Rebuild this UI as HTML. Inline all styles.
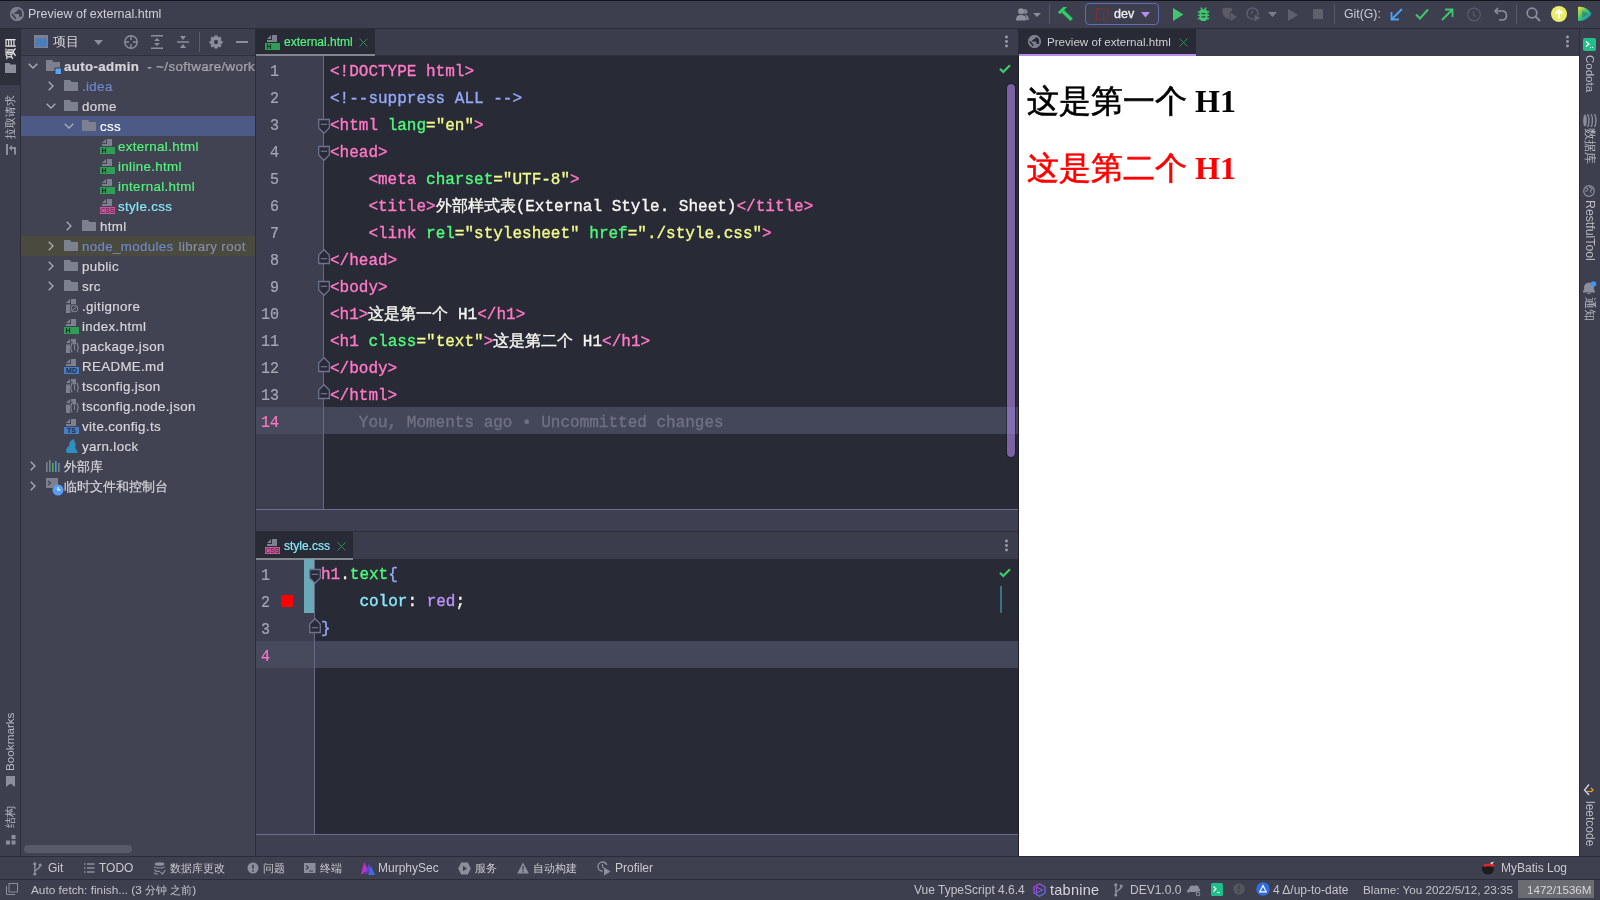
<!DOCTYPE html><html><head><meta charset="utf-8"><style>
*{margin:0;padding:0;box-sizing:border-box}
html,body{width:1600px;height:900px;overflow:hidden;background:#3c3e4d;font-family:"Liberation Sans",sans-serif;color:#cfd0d6}
.a{position:absolute}
svg{position:absolute;overflow:visible}
.t{position:absolute;white-space:nowrap;font-size:13px;line-height:20px}
.code{position:absolute;font-family:"Liberation Mono",monospace;font-size:16px;line-height:27px;white-space:pre;color:#f8f8f2;height:27px;-webkit-text-stroke:0.35px currentColor}
.ln{position:absolute;font-family:"Liberation Mono",monospace;font-size:15px;line-height:27px;color:#a5a7b5;text-align:right;height:27px;transform:scaleY(1.12);transform-origin:0 19.5px;-webkit-text-stroke:0.2px currentColor}
.pk{color:#ff79c6}.gr{color:#50fa7b}.ye{color:#f1fa8c}.cm{color:#6272a4}.cm2{color:#95a9f6}.bl{color:#6f7182}.cy{color:#8be9fd}.pu{color:#bd93f9}.wh{color:#f8f8f2}
.vt{position:absolute;transform-origin:0 0;white-space:nowrap;font-size:12px;line-height:14px;color:#c4c5cc}
</style></head><body><div id="root" style="position:absolute;left:0;top:0;width:1600px;height:900px;will-change:transform">
<div class="a" style="left:0px;top:0px;width:1600px;height:1px;background:#141519;"></div>
<div class="a" style="left:0px;top:1px;width:1600px;height:27px;background:#3d3f4e;"></div>
<div class="a" style="left:0px;top:28px;width:1600px;height:1px;background:#2a2c36;"></div>
<div class="a" style="left:0px;top:29px;width:20px;height:827px;background:#3d3f4e;"></div>
<div class="a" style="left:0px;top:29px;width:20px;height:56px;background:#2e303c;"></div>
<div class="a" style="left:20px;top:29px;width:1px;height:827px;background:#2b2d38;"></div>
<div class="a" style="left:21px;top:29px;width:234px;height:827px;background:#414352;"></div>
<div class="a" style="left:21px;top:29px;width:234px;height:26px;background:#3c3e4e;"></div>
<div class="a" style="left:21px;top:55px;width:234px;height:1px;background:#2e303b;"></div>
<div class="a" style="left:255px;top:29px;width:1px;height:827px;background:#2b2d38;"></div>
<div class="a" style="left:256px;top:29px;width:762px;height:26px;background:#3b3d4d;"></div>
<div class="a" style="left:256px;top:55px;width:762px;height:1px;background:#2e303b;"></div>
<div class="a" style="left:256px;top:56px;width:762px;height:453px;background:#282a36;"></div>
<div class="a" style="left:256px;top:56px;width:67px;height:453px;background:#3d3f50;"></div>
<div class="a" style="left:323px;top:56px;width:1px;height:453px;background:#666a86;"></div>
<div class="a" style="left:256px;top:407px;width:67px;height:27px;background:#474a5c;"></div>
<div class="a" style="left:324px;top:407px;width:694px;height:27px;background:#44475a;"></div>
<div class="a" style="left:256px;top:509px;width:762px;height:1px;background:#6b6f92;"></div>
<div class="a" style="left:256px;top:510px;width:762px;height:21px;background:#3e4051;"></div>
<div class="a" style="left:256px;top:531px;width:762px;height:1px;background:#2b2d38;"></div>
<div class="a" style="left:256px;top:532px;width:762px;height:27px;background:#3b3d4d;"></div>
<div class="a" style="left:256px;top:559px;width:762px;height:297px;background:#282a36;"></div>
<div class="a" style="left:256px;top:559px;width:58px;height:297px;background:#3d3f50;"></div>
<div class="a" style="left:314px;top:559px;width:1px;height:297px;background:#666a86;"></div>
<div class="a" style="left:256px;top:641px;width:58px;height:27px;background:#474a5c;"></div>
<div class="a" style="left:315px;top:641px;width:703px;height:27px;background:#44475a;"></div>
<div class="a" style="left:256px;top:834px;width:762px;height:1px;background:#6b6f92;"></div>
<div class="a" style="left:256px;top:835px;width:762px;height:21px;background:#3e4051;"></div>
<div class="a" style="left:1018px;top:29px;width:1px;height:827px;background:#2b2d38;"></div>
<div class="a" style="left:1019px;top:29px;width:560px;height:26px;background:#3b3d4d;"></div>
<div class="a" style="left:1019px;top:56px;width:560px;height:800px;background:#ffffff;"></div>
<div class="a" style="left:1579px;top:29px;width:1px;height:827px;background:#2b2d38;"></div>
<div class="a" style="left:1580px;top:29px;width:20px;height:827px;background:#3d3f4e;"></div>
<div class="a" style="left:0px;top:856px;width:1600px;height:1px;background:#2a2c36;"></div>
<div class="a" style="left:0px;top:857px;width:1600px;height:22px;background:#3d3f4e;"></div>
<div class="a" style="left:0px;top:857px;width:1600px;height:22px;background:#3e404f;"></div>
<div class="a" style="left:0px;top:879px;width:1600px;height:1px;background:#2a2c36;"></div>
<div class="a" style="left:0px;top:880px;width:1600px;height:20px;background:#3d3f4e;"></div>
<div class="code" style="left:330px;top:58.5px"><span class="pk">&lt;!DOCTYPE html&gt;</span></div>
<div class="ln" style="left:256px;top:59px;width:23px;color:#a5a7b5">1</div>
<div class="code" style="left:330px;top:85.5px"><span class="cm2">&lt;!--suppress ALL --&gt;</span></div>
<div class="ln" style="left:256px;top:86px;width:23px;color:#a5a7b5">2</div>
<div class="code" style="left:330px;top:112.5px"><span class="pk">&lt;html</span><span class="wh"> </span><span class="gr">lang</span><span class="ye">="en"</span><span class="pk">&gt;</span></div>
<div class="ln" style="left:256px;top:113px;width:23px;color:#a5a7b5">3</div>
<div class="code" style="left:330px;top:139.5px"><span class="pk">&lt;head&gt;</span></div>
<div class="ln" style="left:256px;top:140px;width:23px;color:#a5a7b5">4</div>
<div class="code" style="left:330px;top:166.5px"><span class="wh">    </span><span class="pk">&lt;meta</span><span class="wh"> </span><span class="gr">charset</span><span class="ye">="UTF-8"</span><span class="pk">&gt;</span></div>
<div class="ln" style="left:256px;top:167px;width:23px;color:#a5a7b5">5</div>
<div class="code" style="left:330px;top:193.5px"><span class="wh">    </span><span class="pk">&lt;title&gt;</span><span class="wh">外部样式表(External Style. Sheet)</span><span class="pk">&lt;/title&gt;</span></div>
<div class="ln" style="left:256px;top:194px;width:23px;color:#a5a7b5">6</div>
<div class="code" style="left:330px;top:220.5px"><span class="wh">    </span><span class="pk">&lt;link</span><span class="wh"> </span><span class="gr">rel</span><span class="ye">="stylesheet"</span><span class="wh"> </span><span class="gr">href</span><span class="ye">="./style.css"</span><span class="pk">&gt;</span></div>
<div class="ln" style="left:256px;top:221px;width:23px;color:#a5a7b5">7</div>
<div class="code" style="left:330px;top:247.5px"><span class="pk">&lt;/head&gt;</span></div>
<div class="ln" style="left:256px;top:248px;width:23px;color:#a5a7b5">8</div>
<div class="code" style="left:330px;top:274.5px"><span class="pk">&lt;body&gt;</span></div>
<div class="ln" style="left:256px;top:275px;width:23px;color:#a5a7b5">9</div>
<div class="code" style="left:330px;top:301.5px"><span class="pk">&lt;h1&gt;</span><span class="wh">这是第一个 H1</span><span class="pk">&lt;/h1&gt;</span></div>
<div class="ln" style="left:256px;top:302px;width:23px;color:#a5a7b5">10</div>
<div class="code" style="left:330px;top:328.5px"><span class="pk">&lt;h1</span><span class="wh"> </span><span class="gr">class</span><span class="ye">="text"</span><span class="pk">&gt;</span><span class="wh">这是第二个 H1</span><span class="pk">&lt;/h1&gt;</span></div>
<div class="ln" style="left:256px;top:329px;width:23px;color:#a5a7b5">11</div>
<div class="code" style="left:330px;top:355.5px"><span class="pk">&lt;/body&gt;</span></div>
<div class="ln" style="left:256px;top:356px;width:23px;color:#a5a7b5">12</div>
<div class="code" style="left:330px;top:382.5px"><span class="pk">&lt;/html&gt;</span></div>
<div class="ln" style="left:256px;top:383px;width:23px;color:#a5a7b5">13</div>
<div class="code" style="left:330px;top:409.5px"><span class="bl">   You, Moments ago • Uncommitted changes</span></div>
<div class="ln" style="left:256px;top:410px;width:23px;color:#ff79c6">14</div>
<div class="code" style="left:321px;top:562px"><span class="pk">h1</span><span class="wh">.</span><span class="gr">text</span><span class="cm2">{</span></div>
<div class="ln" style="left:256px;top:563px;width:14px;color:#a5a7b5">1</div>
<div class="code" style="left:321px;top:589px"><span class="wh">    </span><span class="cy">color</span><span class="wh">: </span><span class="pu">red</span><span class="wh">;</span></div>
<div class="ln" style="left:256px;top:590px;width:14px;color:#a5a7b5">2</div>
<div class="code" style="left:321px;top:616px"><span class="cm2">}</span></div>
<div class="ln" style="left:256px;top:617px;width:14px;color:#a5a7b5">3</div>
<div class="code" style="left:321px;top:643px"></div>
<div class="ln" style="left:256px;top:644px;width:14px;color:#ff79c6">4</div>
<div class="a" style="left:21px;top:116px;width:234px;height:20px;background:#4e5a86;"></div>
<div class="a" style="left:21px;top:236px;width:234px;height:20px;background:#4b4a3f;"></div>
<div class="a" style="left:21px;top:56px;width:234px;height:444px;overflow:hidden">
<svg style="left:6.5px;top:6.5px" width="10" height="6"><path d="M0.7 0.7 L5 5 L9.3 0.7" fill="none" stroke="#a9abb6" stroke-width="1.3"/></svg>
<svg style="left:25px;top:4px" width="16" height="14"><path d="M0 0 H6 L7.5 2 H14 V11 H0 Z" fill="#7d808e"/><rect x="8.5" y="7.5" width="7" height="7" fill="#3b3d4a"/><rect x="9.5" y="8.5" width="5.5" height="5.5" fill="#5aa2f5"/></svg>
<div class="t" style="left:43px;top:1px;color:#d6d6da;font-size:13.3px;letter-spacing:0.36px;-webkit-text-stroke:0.2px #d6d6da"><b>auto-admin</b><span style="color:#8f9097">&nbsp; - ~/software/work</span></div>
<svg style="left:26.5px;top:24.5px" width="6" height="10"><path d="M0.7 0.7 L5 5 L0.7 9.3" fill="none" stroke="#a9abb6" stroke-width="1.3"/></svg>
<svg style="left:43px;top:24px" width="16" height="14"><path d="M0 0 H6 L7.5 2 H14 V11 H0 Z" fill="#7d808e"/></svg>
<div class="t" style="left:61px;top:21px;color:#6f86c9;font-size:13.3px;letter-spacing:0.36px;-webkit-text-stroke:0.2px #6f86c9">.idea</div>
<svg style="left:24.5px;top:46.5px" width="10" height="6"><path d="M0.7 0.7 L5 5 L9.3 0.7" fill="none" stroke="#a9abb6" stroke-width="1.3"/></svg>
<svg style="left:43px;top:44px" width="16" height="14"><path d="M0 0 H6 L7.5 2 H14 V11 H0 Z" fill="#7d808e"/></svg>
<div class="t" style="left:61px;top:41px;color:#d6d6da;font-size:13.3px;letter-spacing:0.36px;-webkit-text-stroke:0.2px #d6d6da">dome</div>
<svg style="left:42.5px;top:66.5px" width="10" height="6"><path d="M0.7 0.7 L5 5 L9.3 0.7" fill="none" stroke="#a9abb6" stroke-width="1.3"/></svg>
<svg style="left:61px;top:64px" width="16" height="14"><path d="M0 0 H6 L7.5 2 H14 V11 H0 Z" fill="#7d808e"/></svg>
<div class="t" style="left:79px;top:61px;color:#ffffff;font-size:13.3px;letter-spacing:0.36px;-webkit-text-stroke:0.2px #ffffff">css</div>
<svg style="left:79px;top:82px" width="16" height="16"><path d="M2 5 L6 1 V5 Z M7 1 H12 V8 H2 V6 H7 Z" fill="#7d808e"/><rect x="0" y="9" width="15" height="7" fill="#2f9d55"/><path d="M2.5 10 V15 M5.5 10 V15 M2.5 12.5 H5.5" stroke="#1d3527" stroke-width="1.1"/></svg>
<div class="t" style="left:97px;top:81px;color:#52f47b;font-size:13.3px;letter-spacing:0.36px;-webkit-text-stroke:0.2px #52f47b">external.html</div>
<svg style="left:79px;top:102px" width="16" height="16"><path d="M2 5 L6 1 V5 Z M7 1 H12 V8 H2 V6 H7 Z" fill="#7d808e"/><rect x="0" y="9" width="15" height="7" fill="#2f9d55"/><path d="M2.5 10 V15 M5.5 10 V15 M2.5 12.5 H5.5" stroke="#1d3527" stroke-width="1.1"/></svg>
<div class="t" style="left:97px;top:101px;color:#52f47b;font-size:13.3px;letter-spacing:0.36px;-webkit-text-stroke:0.2px #52f47b">inline.html</div>
<svg style="left:79px;top:122px" width="16" height="16"><path d="M2 5 L6 1 V5 Z M7 1 H12 V8 H2 V6 H7 Z" fill="#7d808e"/><rect x="0" y="9" width="15" height="7" fill="#2f9d55"/><path d="M2.5 10 V15 M5.5 10 V15 M2.5 12.5 H5.5" stroke="#1d3527" stroke-width="1.1"/></svg>
<div class="t" style="left:97px;top:121px;color:#52f47b;font-size:13.3px;letter-spacing:0.36px;-webkit-text-stroke:0.2px #52f47b">internal.html</div>
<svg style="left:79px;top:142px" width="16" height="16"><path d="M2 5 L6 1 V5 Z M7 1 H12 V8 H2 V6 H7 Z" fill="#7d808e"/><rect x="0" y="9" width="15" height="7" fill="#c9579a"/><text x="7.5" y="15.3" font-size="7" text-anchor="middle" fill="#3a2233" font-family="Liberation Sans">CSS</text></svg>
<div class="t" style="left:97px;top:141px;color:#86e6f8;font-size:13.3px;letter-spacing:0.36px;-webkit-text-stroke:0.2px #86e6f8">style.css</div>
<svg style="left:44.5px;top:164.5px" width="6" height="10"><path d="M0.7 0.7 L5 5 L0.7 9.3" fill="none" stroke="#a9abb6" stroke-width="1.3"/></svg>
<svg style="left:61px;top:164px" width="16" height="14"><path d="M0 0 H6 L7.5 2 H14 V11 H0 Z" fill="#7d808e"/></svg>
<div class="t" style="left:79px;top:161px;color:#d6d6da;font-size:13.3px;letter-spacing:0.36px;-webkit-text-stroke:0.2px #d6d6da">html</div>
<svg style="left:26.5px;top:184.5px" width="6" height="10"><path d="M0.7 0.7 L5 5 L0.7 9.3" fill="none" stroke="#a9abb6" stroke-width="1.3"/></svg>
<svg style="left:43px;top:184px" width="16" height="14"><path d="M0 0 H6 L7.5 2 H14 V11 H0 Z" fill="#7d808e"/></svg>
<div class="t" style="left:61px;top:181px;color:#6f86c9;font-size:13.3px;letter-spacing:0.36px;-webkit-text-stroke:0.2px #6f86c9">node_modules<span style="color:#8e8f93"><span style="margin-left:5px">library root</span></span></div>
<svg style="left:26.5px;top:204.5px" width="6" height="10"><path d="M0.7 0.7 L5 5 L0.7 9.3" fill="none" stroke="#a9abb6" stroke-width="1.3"/></svg>
<svg style="left:43px;top:204px" width="16" height="14"><path d="M0 0 H6 L7.5 2 H14 V11 H0 Z" fill="#7d808e"/></svg>
<div class="t" style="left:61px;top:201px;color:#d6d6da;font-size:13.3px;letter-spacing:0.36px;-webkit-text-stroke:0.2px #d6d6da">public</div>
<svg style="left:26.5px;top:224.5px" width="6" height="10"><path d="M0.7 0.7 L5 5 L0.7 9.3" fill="none" stroke="#a9abb6" stroke-width="1.3"/></svg>
<svg style="left:43px;top:224px" width="16" height="14"><path d="M0 0 H6 L7.5 2 H14 V11 H0 Z" fill="#7d808e"/></svg>
<div class="t" style="left:61px;top:221px;color:#d6d6da;font-size:13.3px;letter-spacing:0.36px;-webkit-text-stroke:0.2px #d6d6da">src</div>
<svg style="left:43px;top:242px" width="16" height="16"><path d="M2 5 L6 1 V5 Z M7 1 H12 V6.5 H7 Z M2 6.5 H6.5 V15 H2 Z" fill="#7d808e"/><circle cx="10.5" cy="10.5" r="4.6" fill="#414352"/><circle cx="10.5" cy="10.5" r="3.2" fill="none" stroke="#7d808e" stroke-width="1.1"/><path d="M8.3 12.7 L12.7 8.3" stroke="#7d808e" stroke-width="1.1"/></svg>
<div class="t" style="left:61px;top:241px;color:#d6d6da;font-size:13.3px;letter-spacing:0.36px;-webkit-text-stroke:0.2px #d6d6da">.gitignore</div>
<svg style="left:43px;top:262px" width="16" height="16"><path d="M2 5 L6 1 V5 Z M7 1 H12 V8 H2 V6 H7 Z" fill="#7d808e"/><rect x="0" y="9" width="15" height="7" fill="#2f9d55"/><path d="M2.5 10 V15 M5.5 10 V15 M2.5 12.5 H5.5" stroke="#1d3527" stroke-width="1.1"/></svg>
<div class="t" style="left:61px;top:261px;color:#d6d6da;font-size:13.3px;letter-spacing:0.36px;-webkit-text-stroke:0.2px #d6d6da">index.html</div>
<svg style="left:43px;top:282px" width="16" height="16"><path d="M2 5 L6 1 V5 Z M7 1 H12 V6.5 H7 Z M2 6.5 H6.5 V15 H2 Z" fill="#7d808e"/><path d="M8.5 5 C7.3 5 7.3 6 7.3 7.5 C7.3 9 7 9.5 6 9.5 C7 9.5 7.3 10 7.3 11.5 C7.3 13 7.3 14 8.5 14 M12.5 5 C13.7 5 13.7 6 13.7 7.5 C13.7 9 14 9.5 15 9.5 C14 9.5 13.7 10 13.7 11.5 C13.7 13 13.7 14 12.5 14 M10.5 7 V12" stroke="#414352" stroke-width="3" fill="none"/><path d="M8.5 5 C7.3 5 7.3 6 7.3 7.5 C7.3 9 7 9.5 6 9.5 C7 9.5 7.3 10 7.3 11.5 C7.3 13 7.3 14 8.5 14 M12.5 5 C13.7 5 13.7 6 13.7 7.5 C13.7 9 14 9.5 15 9.5 C14 9.5 13.7 10 13.7 11.5 C13.7 13 13.7 14 12.5 14 M10.5 7 V12" stroke="#7d808e" stroke-width="1.2" fill="none"/></svg>
<div class="t" style="left:61px;top:281px;color:#d6d6da;font-size:13.3px;letter-spacing:0.36px;-webkit-text-stroke:0.2px #d6d6da">package.json</div>
<svg style="left:43px;top:302px" width="16" height="16"><path d="M2 5 L6 1 V5 Z M7 1 H12 V8 H2 V6 H7 Z" fill="#7d808e"/><rect x="0" y="9" width="15" height="7" fill="#4a7cc1"/><text x="7.5" y="15.3" font-size="7" text-anchor="middle" fill="#1c2840" font-family="Liberation Sans" font-weight="bold">MD</text></svg>
<div class="t" style="left:61px;top:301px;color:#d6d6da;font-size:13.3px;letter-spacing:0.36px;-webkit-text-stroke:0.2px #d6d6da">README.md</div>
<svg style="left:43px;top:322px" width="16" height="16"><path d="M2 5 L6 1 V5 Z M7 1 H12 V6.5 H7 Z M2 6.5 H6.5 V15 H2 Z" fill="#7d808e"/><path d="M8.5 5 C7.3 5 7.3 6 7.3 7.5 C7.3 9 7 9.5 6 9.5 C7 9.5 7.3 10 7.3 11.5 C7.3 13 7.3 14 8.5 14 M12.5 5 C13.7 5 13.7 6 13.7 7.5 C13.7 9 14 9.5 15 9.5 C14 9.5 13.7 10 13.7 11.5 C13.7 13 13.7 14 12.5 14 M10.5 7 V12" stroke="#414352" stroke-width="3" fill="none"/><path d="M8.5 5 C7.3 5 7.3 6 7.3 7.5 C7.3 9 7 9.5 6 9.5 C7 9.5 7.3 10 7.3 11.5 C7.3 13 7.3 14 8.5 14 M12.5 5 C13.7 5 13.7 6 13.7 7.5 C13.7 9 14 9.5 15 9.5 C14 9.5 13.7 10 13.7 11.5 C13.7 13 13.7 14 12.5 14 M10.5 7 V12" stroke="#7d808e" stroke-width="1.2" fill="none"/></svg>
<div class="t" style="left:61px;top:321px;color:#d6d6da;font-size:13.3px;letter-spacing:0.36px;-webkit-text-stroke:0.2px #d6d6da">tsconfig.json</div>
<svg style="left:43px;top:342px" width="16" height="16"><path d="M2 5 L6 1 V5 Z M7 1 H12 V6.5 H7 Z M2 6.5 H6.5 V15 H2 Z" fill="#7d808e"/><path d="M8.5 5 C7.3 5 7.3 6 7.3 7.5 C7.3 9 7 9.5 6 9.5 C7 9.5 7.3 10 7.3 11.5 C7.3 13 7.3 14 8.5 14 M12.5 5 C13.7 5 13.7 6 13.7 7.5 C13.7 9 14 9.5 15 9.5 C14 9.5 13.7 10 13.7 11.5 C13.7 13 13.7 14 12.5 14 M10.5 7 V12" stroke="#414352" stroke-width="3" fill="none"/><path d="M8.5 5 C7.3 5 7.3 6 7.3 7.5 C7.3 9 7 9.5 6 9.5 C7 9.5 7.3 10 7.3 11.5 C7.3 13 7.3 14 8.5 14 M12.5 5 C13.7 5 13.7 6 13.7 7.5 C13.7 9 14 9.5 15 9.5 C14 9.5 13.7 10 13.7 11.5 C13.7 13 13.7 14 12.5 14 M10.5 7 V12" stroke="#7d808e" stroke-width="1.2" fill="none"/></svg>
<div class="t" style="left:61px;top:341px;color:#d6d6da;font-size:13.3px;letter-spacing:0.36px;-webkit-text-stroke:0.2px #d6d6da">tsconfig.node.json</div>
<svg style="left:43px;top:362px" width="16" height="16"><path d="M2 5 L6 1 V5 Z M7 1 H12 V8 H2 V6 H7 Z" fill="#7d808e"/><rect x="0" y="9" width="15" height="7" fill="#4a7cc1"/><text x="7.5" y="15.3" font-size="7" text-anchor="middle" fill="#1c2840" font-family="Liberation Sans" font-weight="bold">TS</text></svg>
<div class="t" style="left:61px;top:361px;color:#d6d6da;font-size:13.3px;letter-spacing:0.36px;-webkit-text-stroke:0.2px #d6d6da">vite.config.ts</div>
<svg style="left:43px;top:382px" width="16" height="16"><path d="M3 15 C1 12 3 9 5 8 C5 5 6 3 8 2 L10 1 L10.5 4 C12 5 12 7 11 9 C12 11 13 13 14 15 Z" fill="#2f8fc0"/></svg>
<div class="t" style="left:61px;top:381px;color:#d6d6da;font-size:13.3px;letter-spacing:0.36px;-webkit-text-stroke:0.2px #d6d6da">yarn.lock</div>
<svg style="left:8.5px;top:404.5px" width="6" height="10"><path d="M0.7 0.7 L5 5 L0.7 9.3" fill="none" stroke="#a9abb6" stroke-width="1.3"/></svg>
<svg style="left:25px;top:403px" width="16" height="14"><rect x="0" y="3" width="1.6" height="10" fill="#7d808e"/><rect x="3" y="1" width="1.6" height="12" fill="#7d808e"/><rect x="6" y="4" width="1.6" height="9" fill="#3fb46a"/><rect x="9" y="2" width="1.6" height="11" fill="#4a9ad8"/><rect x="12" y="4" width="1.6" height="9" fill="#7d808e"/></svg>
<div class="t" style="left:43px;top:401px;color:#d6d6da;font-size:13.3px;letter-spacing:0.36px;-webkit-text-stroke:0.2px #d6d6da"><span style="font-size:13px;letter-spacing:0">外部库</span></div>
<svg style="left:8.5px;top:424.5px" width="6" height="10"><path d="M0.7 0.7 L5 5 L0.7 9.3" fill="none" stroke="#a9abb6" stroke-width="1.3"/></svg>
<svg style="left:25px;top:422px" width="18" height="18"><rect x="0" y="0" width="12" height="10" fill="#7d808e"/><path d="M2 3 L4.5 5 L2 7" stroke="#414352" stroke-width="1.2" fill="none"/><circle cx="12" cy="12" r="5.5" fill="#589df6"/><path d="M12 9 V12 H14.5" stroke="#fff" stroke-width="1.2" fill="none"/></svg>
<div class="t" style="left:43px;top:421px;color:#d6d6da;font-size:13.3px;letter-spacing:0.36px;-webkit-text-stroke:0.2px #d6d6da"><span style="font-size:13px;letter-spacing:0">临时文件和控制台</span></div>
</div>
<div class="a" style="left:24px;top:845px;width:108px;height:8px;background:#575a68;border-radius:4px"></div>
<svg style="left:10px;top:7px" width="16.0" height="16.0" viewBox="0 0 16 16"><circle cx="7" cy="7" r="6.9" fill="#7d808e"/><circle cx="7" cy="7" r="6" fill="none" stroke="#3d3f4e" stroke-width="0.0"/><path d="M4.2 6.3 L9.3 2.1 L11.8 4.3 L12.2 9.4 L9.1 9.7 L8.9 7 L4.2 7 Z" fill="#3d3f4e"/><path d="M1.8 6.8 L5.8 11.7" stroke="#3d3f4e" stroke-width="1.6"/><circle cx="7" cy="7" r="6.4" fill="none" stroke="#7d808e" stroke-width="1.1"/></svg>
<div class="t" style="left:28px;top:4px;color:#cfd0d5;font-size:12.5px;line-height:20px;">Preview of external.html</div>
<svg style="left:34px;top:35px" width="14" height="13"><rect x="0" y="0" width="14" height="13" fill="#7d808e"/><rect x="1.3" y="3.2" width="11.4" height="8.5" fill="#4a7dbd"/></svg>
<div class="t" style="left:53px;top:32px;color:#d6d6da;font-size:13px;line-height:20px;"><span style="font-size:13px">项目</span></div>
<svg style="left:94px;top:40px" width="9" height="5"><path d="M0 0 H9 L4.5 5 Z" fill="#8c8e9c"/></svg>
<svg style="left:124px;top:35px" width="15" height="15"><circle cx="7" cy="7" r="6.2" fill="none" stroke="#8c8e9c" stroke-width="1.4"/><path d="M7 0.5 V5 M7 9 V13.5 M0.5 7 H5 M9 7 H13.5" stroke="#8c8e9c" stroke-width="1.4"/></svg>
<svg style="left:151px;top:35px" width="13" height="14"><path d="M0 0.8 H12 M0 13.2 H12" stroke="#8c8e9c" stroke-width="1.5"/><path d="M6 3 L9 6 H3 Z M6 11 L9 8 H3 Z" fill="#8c8e9c"/></svg>
<svg style="left:177px;top:35px" width="13" height="14"><path d="M0 7 H12" stroke="#8c8e9c" stroke-width="1.5"/><path d="M6 5 L9 1 H3 Z M6 9 L9 13 H3 Z" fill="#8c8e9c"/></svg>
<div class="a" style="left:199px;top:32px;width:1px;height:20px;background:#5a5c6a;"></div>
<svg style="left:210px;top:35px" width="14" height="14"><g transform="translate(6,7)"><path d="M-1.5 -6.5 H1.5 L2 -4.5 L4 -5.5 L5.5 -3.5 L4.5 -1.5 L6.5 -1 V1.5 L4.5 2 L5.5 4 L4 5.5 L2 4.5 L1.5 6.5 H-1.5 L-2 4.5 L-4 5.5 L-5.5 4 L-4.5 2 L-6.5 1.5 V-1 L-4.5 -1.5 L-5.5 -3.5 L-4 -5.5 L-2 -4.5 Z" fill="#8c8e9c"/><circle r="2.2" fill="#3c3e4e"/></g></svg>
<div class="a" style="left:236px;top:41px;width:12px;height:2px;background:#8c8e9c;"></div>
<div class="a" style="left:256px;top:29px;width:119px;height:25px;background:#282a36;"></div>
<div class="a" style="left:256px;top:54px;width:119px;height:2px;background:#85878f;"></div>
<svg style="left:265px;top:34px" width="16" height="16"><path d="M2 5 L6 1 V5 Z M7 1 H12 V8 H2 V6 H7 Z" fill="#7d808e"/><rect x="0" y="9" width="15" height="7" fill="#2f9d55"/><path d="M2.5 10 V15 M5.5 10 V15 M2.5 12.5 H5.5" stroke="#1d3527" stroke-width="1.1"/></svg>
<div class="t" style="left:284px;top:32px;color:#55f47c;font-size:12px;line-height:20px;-webkit-text-stroke:0.2px #55f47c">external.html</div>
<svg style="left:359px;top:38px" width="9" height="9"><path d="M0.5 0.5 L8.5 8.5 M8.5 0.5 L0.5 8.5" stroke="#2f8a4c" stroke-width="1"/></svg>
<svg style="left:1003.5px;top:35px" width="5" height="13"><circle cx="2.5" cy="2" r="1.45" fill="#9a9ca8"/><circle cx="2.5" cy="6.5" r="1.45" fill="#9a9ca8"/><circle cx="2.5" cy="11" r="1.45" fill="#9a9ca8"/></svg>
<div class="a" style="left:256px;top:532px;width:97px;height:26px;background:#282a36;"></div>
<div class="a" style="left:256px;top:558px;width:97px;height:2px;background:#85878f;"></div>
<svg style="left:265px;top:538px" width="16" height="16"><path d="M2 5 L6 1 V5 Z M7 1 H12 V8 H2 V6 H7 Z" fill="#7d808e"/><rect x="0" y="9" width="15" height="7" fill="#c9579a"/><text x="7.5" y="15.3" font-size="7" text-anchor="middle" fill="#3a2233" font-family="Liberation Sans">CSS</text></svg>
<div class="t" style="left:284px;top:536px;color:#8be9fd;font-size:12px;line-height:20px;-webkit-text-stroke:0.2px #8be9fd">style.css</div>
<svg style="left:337px;top:542px" width="9" height="9"><path d="M0.5 0.5 L8.5 8.5 M8.5 0.5 L0.5 8.5" stroke="#2f8a4c" stroke-width="1"/></svg>
<svg style="left:1003.5px;top:539px" width="5" height="13"><circle cx="2.5" cy="2" r="1.45" fill="#9a9ca8"/><circle cx="2.5" cy="6.5" r="1.45" fill="#9a9ca8"/><circle cx="2.5" cy="11" r="1.45" fill="#9a9ca8"/></svg>
<div class="a" style="left:1019px;top:29px;width:177px;height:25px;background:#282a36;"></div>
<div class="a" style="left:1019px;top:54px;width:177px;height:2px;background:#b98df0;"></div>
<svg style="left:1028px;top:35px" width="14.88" height="14.88" viewBox="0 0 16 16"><circle cx="7" cy="7" r="6.9" fill="#7d808e"/><circle cx="7" cy="7" r="6" fill="none" stroke="#282a36" stroke-width="0.0"/><path d="M4.2 6.3 L9.3 2.1 L11.8 4.3 L12.2 9.4 L9.1 9.7 L8.9 7 L4.2 7 Z" fill="#282a36"/><path d="M1.8 6.8 L5.8 11.7" stroke="#282a36" stroke-width="1.6"/><circle cx="7" cy="7" r="6.4" fill="none" stroke="#7d808e" stroke-width="1.1"/></svg>
<div class="t" style="left:1047px;top:32px;color:#cfd0d5;font-size:11.6px;line-height:20px;">Preview of external.html</div>
<svg style="left:1179px;top:38px" width="9" height="9"><path d="M0.5 0.5 L8.5 8.5 M8.5 0.5 L0.5 8.5" stroke="#2f8a4c" stroke-width="1"/></svg>
<svg style="left:1564.5px;top:35px" width="5" height="13"><circle cx="2.5" cy="2" r="1.45" fill="#9a9ca8"/><circle cx="2.5" cy="6.5" r="1.45" fill="#9a9ca8"/><circle cx="2.5" cy="11" r="1.45" fill="#9a9ca8"/></svg>
<div class="vt" style="left:3px;top:59px;transform:rotate(-90deg);font-size:11px;line-height:14px;color:#e6e6ea"><b>项目</b></div>
<svg style="left:5px;top:63px" width="12" height="11"><path d="M0 0 H4.5 L5.5 1.5 H11 V10 H0 Z" fill="#8c8e9c"/></svg>
<div class="vt" style="left:3px;top:139px;transform:rotate(-90deg);font-size:11px;line-height:14px;color:#b9bac2">拉取请求</div>
<svg style="left:5px;top:143px" width="12" height="13"><rect x="1" y="1" width="2" height="11" fill="#8c8e9c"/><path d="M3.8 5 L7 2 V8 Z" fill="#8c8e9c"/><path d="M6 5 H10 V11.5" stroke="#8c8e9c" stroke-width="2" fill="none"/></svg>
<div class="vt" style="left:3px;top:771px;transform:rotate(-90deg);font-size:11.7px;line-height:14px;color:#b9bac2">Bookmarks</div>
<svg style="left:6px;top:776px" width="10" height="12"><path d="M0 0 H9 V11 L4.5 7.5 L0 11 Z" fill="#8c8e9c"/></svg>
<div class="vt" style="left:3px;top:828px;transform:rotate(-90deg);font-size:11px;line-height:14px;color:#b9bac2">结构</div>
<svg style="left:6px;top:835px" width="10" height="10"><rect x="5.5" y="0" width="4" height="4" fill="#8c8e9c"/><rect x="0" y="5.5" width="4" height="4" fill="#8c8e9c"/><rect x="5.5" y="5.5" width="4" height="4" fill="#8c8e9c"/></svg>
<svg style="left:1583px;top:38px" width="13" height="13"><rect x="0" y="0" width="13" height="13" rx="2" fill="#21c08b"/><path d="M3 3.5 L6 6 L3 8.5" stroke="#fff" stroke-width="1.3" fill="none"/><path d="M7 9.5 H10" stroke="#fff" stroke-width="1.2" stroke-dasharray="1 1"/></svg>
<div class="vt" style="left:1597px;top:55px;transform:rotate(90deg);font-size:11.5px;line-height:14px;color:#b9bac2">Codota</div>
<svg style="left:1583px;top:114px" width="13" height="13"><ellipse cx="2" cy="6.5" rx="1.8" ry="6" fill="#8c8e9c"/><path d="M4 0.5 C6.5 0.5 6.5 12.5 4 12.5 M7.5 0.5 C10 0.5 10 12.5 7.5 12.5 M11 0.5 C13.5 0.5 13.5 12.5 11 12.5" stroke="#8c8e9c" stroke-width="1.4" fill="none"/></svg>
<div class="vt" style="left:1597px;top:128px;transform:rotate(90deg);font-size:11.5px;line-height:14px;color:#b9bac2">数据库</div>
<svg style="left:1583px;top:185px" width="12" height="12"><circle cx="6" cy="6" r="5.3" fill="none" stroke="#8c8e9c" stroke-width="1.2"/><path d="M2.5 3 C4 2.5 5 3.5 4.6 4.8 C4.2 6 3 5.6 2.7 6.8 M6.5 1.2 C6.2 2.3 7.3 3 8.5 3 C9.6 3.4 9.2 4.9 8 5.3 C6.9 5.7 7.3 7.2 8.5 7.6" stroke="#8c8e9c" stroke-width="1.1" fill="none"/></svg>
<div class="vt" style="left:1597px;top:200px;transform:rotate(90deg);font-size:12.3px;line-height:14px;color:#b9bac2">RestfulTool</div>
<svg style="left:1582px;top:281px" width="15" height="15"><path d="M1 11 C2.5 9.5 2.5 8 2.5 6.5 C2.5 3.5 4.5 2 7 2 C9.5 2 11.5 3.5 11.5 6.5 C11.5 8 11.5 9.5 13 11 Z M5.5 12.5 H8.5" fill="#8c8e9c" stroke="#8c8e9c" stroke-width="1"/><circle cx="11.5" cy="3" r="2.8" fill="#3f95f5"/></svg>
<div class="vt" style="left:1597px;top:297px;transform:rotate(90deg);font-size:11.5px;line-height:14px;color:#b9bac2">通知</div>
<svg style="left:1583px;top:784px" width="12" height="13"><path d="M6 0.5 L1.5 6 L6 11" stroke="#d8d8dc" stroke-width="1.3" fill="none"/><path d="M8 4 L10 6 L8 8" stroke="#f0a020" stroke-width="1.3" fill="none"/><path d="M4 7.5 H8" stroke="#f0a020" stroke-width="1.2"/></svg>
<div class="vt" style="left:1597px;top:801px;transform:rotate(90deg);font-size:12px;line-height:14px;color:#b9bac2">leetcode</div>
<svg style="left:317.5px;top:117.5px" width="12" height="17"><path d="M0.7 1.5 H11.3 V10 L6 15.3 L0.7 10 Z" fill="#282a36" stroke="#6f7290" stroke-width="1.3"/><path d="M2.8 6.3 H9.2" stroke="#6f7290" stroke-width="1.2"/></svg>
<svg style="left:317.5px;top:144.5px" width="12" height="17"><path d="M0.7 1.5 H11.3 V10 L6 15.3 L0.7 10 Z" fill="#282a36" stroke="#6f7290" stroke-width="1.3"/><path d="M2.8 6.3 H9.2" stroke="#6f7290" stroke-width="1.2"/></svg>
<svg style="left:317.5px;top:279.5px" width="12" height="17"><path d="M0.7 1.5 H11.3 V10 L6 15.3 L0.7 10 Z" fill="#282a36" stroke="#6f7290" stroke-width="1.3"/><path d="M2.8 6.3 H9.2" stroke="#6f7290" stroke-width="1.2"/></svg>
<svg style="left:317.5px;top:247.5px" width="12" height="17"><path d="M0.7 15.5 H11.3 V7 L6 1.7 L0.7 7 Z" fill="#282a36" stroke="#6f7290" stroke-width="1.3"/><path d="M2.8 10.7 H9.2" stroke="#6f7290" stroke-width="1.2"/></svg>
<svg style="left:317.5px;top:355.5px" width="12" height="17"><path d="M0.7 15.5 H11.3 V7 L6 1.7 L0.7 7 Z" fill="#282a36" stroke="#6f7290" stroke-width="1.3"/><path d="M2.8 10.7 H9.2" stroke="#6f7290" stroke-width="1.2"/></svg>
<svg style="left:317.5px;top:382.5px" width="12" height="17"><path d="M0.7 15.5 H11.3 V7 L6 1.7 L0.7 7 Z" fill="#282a36" stroke="#6f7290" stroke-width="1.3"/><path d="M2.8 10.7 H9.2" stroke="#6f7290" stroke-width="1.2"/></svg>
<div class="a" style="left:304px;top:559px;width:10px;height:54px;background:#6aa9b7;"></div>
<div class="a" style="left:281px;top:595px;width:12px;height:12px;background:#ff0000;"></div>
<svg style="left:308.5px;top:567.5px" width="12" height="17"><path d="M0.7 1.5 H11.3 V10 L6 15.3 L0.7 10 Z" fill="#282a36" stroke="#6f7290" stroke-width="1.3"/><path d="M2.8 6.3 H9.2" stroke="#6f7290" stroke-width="1.2"/></svg>
<svg style="left:308.5px;top:616.5px" width="12" height="17"><path d="M0.7 15.5 H11.3 V7 L6 1.7 L0.7 7 Z" fill="#282a36" stroke="#6f7290" stroke-width="1.3"/><path d="M2.8 10.7 H9.2" stroke="#6f7290" stroke-width="1.2"/></svg>
<svg style="left:999px;top:64px" width="12" height="10"><path d="M1 4.8 L4.3 8 L11 1.2" stroke="#3ccf6a" stroke-width="2.2" fill="none"/></svg>
<svg style="left:999px;top:568px" width="12" height="10"><path d="M1 4.8 L4.3 8 L11 1.2" stroke="#3ccf6a" stroke-width="2.2" fill="none"/></svg>
<div class="a" style="left:1006px;top:83px;width:10px;height:375px;border:1px solid rgba(16,16,24,0.45);border-radius:5px;background:rgba(172,132,232,0.62);background-clip:padding-box"></div>
<div class="a" style="left:1000px;top:586px;width:1.5px;height:27px;background:#38737f;"></div>
<div class="a" style="left:1018px;top:56px;width:1px;height:800px;background:#1e1f27;"></div>
<div class="a" style="left:1027px;top:83px;font-family:'Liberation Serif',serif;font-weight:bold;font-size:32px;line-height:36px;color:#000;white-space:nowrap"><span style="font-weight:normal;-webkit-text-stroke:0.6px currentColor">这是第一个</span> H1</div>
<div class="a" style="left:1027px;top:150px;font-family:'Liberation Serif',serif;font-weight:bold;font-size:32px;line-height:36px;color:#ff0000;white-space:nowrap"><span style="font-weight:normal;-webkit-text-stroke:0.6px currentColor">这是第二个</span> H1</div>
<svg style="left:1016px;top:8px" width="26" height="13"><circle cx="5" cy="3.2" r="3" fill="#8c8e9c"/><path d="M0 12.5 C0 8 2 7 5 7 C8 7 10 8 10 12.5 Z" fill="#8c8e9c"/><circle cx="9" cy="3.5" r="2.5" fill="#8c8e9c" opacity="0.8"/><path d="M9 7 C12 7 13 8.5 13 12 H10" fill="#8c8e9c" opacity="0.8"/><path d="M17 5 H25 L21 9 Z" fill="#8c8e9c"/></svg>
<div class="a" style="left:1049px;top:4px;width:1px;height:20px;background:#555766;"></div>
<svg style="left:1054px;top:3px" width="22" height="22"><path d="M3.9 9.3 L9.3 3.9 L13 4.1 L10.3 7 L6.2 11.3 Z" fill="#30cc66"/><path d="M8.8 8.2 L17.6 16.8" stroke="#30cc66" stroke-width="3.4"/></svg>
<div class="a" style="left:1085px;top:3px;width:74px;height:22px;border:1px solid #5f6db0;border-radius:4px"></div>
<svg style="left:1096px;top:8px" width="13" height="13"><rect x="0.5" y="0.5" width="11.5" height="11.5" fill="none" stroke="#7a2f35" stroke-width="1"/><path d="M7.5 4 V12" stroke="#7a2f35" stroke-width="1"/></svg>
<div class="t" style="left:1114px;top:4px;color:#ececf0;font-size:12.5px;line-height:20px;-webkit-text-stroke:0.35px #ececf0">dev</div>
<svg style="left:1141px;top:12px" width="9" height="6"><path d="M0 0 H9 L4.5 5.5 Z" fill="#b48ef0"/></svg>
<svg style="left:1173px;top:8px" width="11" height="13"><path d="M0 0 L10.5 6.5 L0 13 Z" fill="#3fc66e"/></svg>
<svg style="left:1197px;top:7px" width="14" height="15"><path d="M3.8 0.6 L5.6 2.8 M9.2 0.6 L7.4 2.8" stroke="#3fc66e" stroke-width="1.5"/><path d="M4 2.5 H9 L10.5 4 V12 L8.5 14 H4.5 L2.5 12 V4 Z" fill="#3fc66e"/><path d="M0.8 5 H12.2 M0.8 8.3 H12.2 M0.8 11.5 H12.2" stroke="#3fc66e" stroke-width="1.6"/><path d="M4.5 6.6 H8.5 M4.5 9.9 H8.5" stroke="#3d3f4e" stroke-width="1.4"/></svg>
<svg style="left:1222px;top:7px" width="16" height="15"><path d="M0.5 1.5 C3 0.5 7 0.5 10 1.5 V4.5 H7.8 V12.5 C4 11.5 0.5 9 0.5 5 Z" fill="#5b5c63"/><path d="M8.5 5.5 L15 9.8 L8.5 14.2 Z" fill="#5b5c63"/></svg>
<svg style="left:1246px;top:7px" width="16" height="15"><circle cx="6.5" cy="6.5" r="5.5" fill="none" stroke="#5e606b" stroke-width="1.4"/><path d="M6.5 3.5 L5.5 7" stroke="#5e606b" stroke-width="1.2"/><path d="M8 7 L15.5 11 L8 15 Z" fill="#5e606b" stroke="#3d3f4e" stroke-width="0.8"/></svg>
<svg style="left:1268px;top:12px" width="9" height="6"><path d="M0 0 H9 L4.5 5 Z" fill="#7b7d89"/></svg>
<svg style="left:1288px;top:9px" width="11" height="12"><path d="M0 0 L10 6 L0 12 Z" fill="#5e606b"/></svg>
<div class="a" style="left:1313px;top:9px;width:10px;height:10px;background:#5e606b;"></div>
<div class="a" style="left:1334px;top:4px;width:1px;height:20px;background:#555766;"></div>
<div class="t" style="left:1344px;top:4px;color:#c9cad0;font-size:12.3px;line-height:20px;">Git(G):</div>
<svg style="left:1390px;top:8px" width="13" height="13"><path d="M12 1 L2 11 M1.5 4 V11.5 H9" stroke="#4fa0f0" stroke-width="1.8" fill="none"/></svg>
<svg style="left:1415px;top:8px" width="14" height="12"><path d="M1 6.5 L5 10.5 L13 1.5" stroke="#3fc66e" stroke-width="2" fill="none"/></svg>
<svg style="left:1441px;top:8px" width="13" height="13"><path d="M1 12 L11 2 M4 1.5 H11.5 V9" stroke="#3fc66e" stroke-width="1.8" fill="none"/></svg>
<svg style="left:1467px;top:7px" width="15" height="15"><circle cx="7" cy="7.5" r="6.3" fill="none" stroke="#5a5c66" stroke-width="1.2"/><path d="M6.5 4 V7.8 L9 9.2" stroke="#5a5c66" stroke-width="1.2" fill="none"/></svg>
<svg style="left:1494px;top:7px" width="14" height="14"><path d="M4 1 L1 4 L4 7" stroke="#8c8e9c" stroke-width="1.6" fill="none"/><path d="M1.5 4 H8 C11 4 12.5 6 12.5 8.5 C12.5 11 11 13 8 13 H5" stroke="#8c8e9c" stroke-width="1.6" fill="none"/></svg>
<div class="a" style="left:1516px;top:4px;width:1px;height:20px;background:#555766;"></div>
<svg style="left:1526px;top:7px" width="15" height="15"><circle cx="6" cy="6" r="4.8" fill="none" stroke="#8c8e9c" stroke-width="1.7"/><path d="M9.5 9.5 L14 14" stroke="#8c8e9c" stroke-width="1.8"/></svg>
<svg style="left:1551px;top:6px" width="17" height="17"><circle cx="8" cy="8" r="8" fill="#eaed6b"/><path d="M8 12.5 V4.5 M4.8 7.5 L8 4.3 L11.2 7.5" stroke="#fff" stroke-width="1.8" fill="none"/></svg>
<svg style="left:1577px;top:6px" width="16" height="16"><defs><linearGradient id="tn" x1="0" y1="0" x2="1" y2="1"><stop offset="0" stop-color="#f3e23a"/><stop offset="0.5" stop-color="#2fc37a"/><stop offset="1" stop-color="#1f6fe0"/></linearGradient></defs><path d="M1 1 C6 0 12 3 14.5 8 C12 12.5 6 15.5 1 15 Z" fill="url(#tn)"/><path d="M5 4 L11 8 L5 12 Z" fill="#3d3f4e" opacity="0.35"/></svg>
<svg style="left:33px;top:862px" width="9" height="14"><circle cx="1.8" cy="1.8" r="1.6" fill="#8c8e9c"/><circle cx="1.8" cy="12" r="1.6" fill="#8c8e9c"/><circle cx="7.2" cy="3" r="1.6" fill="#8c8e9c"/><path d="M1.8 2 V12 M7.2 3.5 C7.2 7 1.8 7 1.8 10" stroke="#8c8e9c" stroke-width="1.4" fill="none"/></svg>
<div class="t" style="left:48px;top:858px;color:#c9cad0;font-size:12px;line-height:20px;">Git</div>
<svg style="left:84px;top:863px" width="11" height="10"><path d="M0 1 H1.6 M0 5 H1.6 M0 9 H1.6 M3 1 H10.5 M3 5 H10.5 M3 9 H10.5" stroke="#8c8e9c" stroke-width="1.4"/></svg>
<div class="t" style="left:99px;top:858px;color:#c9cad0;font-size:12px;line-height:20px;">TODO</div>
<svg style="left:154px;top:862px" width="12" height="13"><ellipse cx="5.5" cy="2" rx="5" ry="1.8" fill="#8c8e9c"/><path d="M0.5 4.5 C0.5 6.5 10.5 6.5 10.5 4.5 M0.5 7.5 C0.5 9.5 6 9.5 6 9.5 M0.5 10.5 C0.5 12 4 12 4 12" stroke="#8c8e9c" stroke-width="1.2" fill="none"/><path d="M6.5 10 L8.5 12 L11.5 8" stroke="#8c8e9c" stroke-width="1.2" fill="none"/></svg>
<div class="t" style="left:170px;top:858px;color:#c9cad0;font-size:12px;line-height:20px;"><span style="font-size:11px">数据库更改</span></div>
<svg style="left:247px;top:862px" width="12" height="12"><circle cx="6" cy="6" r="5.5" fill="#8c8e9c"/><path d="M6 2.8 V6.8" stroke="#3d3f4e" stroke-width="1.6"/><circle cx="6" cy="8.9" r="0.9" fill="#3d3f4e"/></svg>
<div class="t" style="left:263px;top:858px;color:#c9cad0;font-size:12px;line-height:20px;"><span style="font-size:11px">问题</span></div>
<svg style="left:304px;top:863px" width="12" height="10"><rect x="0" y="0" width="11.5" height="10" fill="#8c8e9c"/><path d="M2 2.5 L4.5 4.5 L2 6.5 M5 8 H9" stroke="#3d3f4e" stroke-width="1.1" fill="none"/></svg>
<div class="t" style="left:320px;top:858px;color:#c9cad0;font-size:12px;line-height:20px;"><span style="font-size:11px">终端</span></div>
<svg style="left:361px;top:862px" width="14" height="13"><path d="M0 13 L3 0 L7 8 Z" fill="#b534c9"/><path d="M4 13 L8 1 L10 7 Z" fill="#6a3fd8"/><path d="M7 13 L10 4 L14 13 Z" fill="#3f69e0"/></svg>
<div class="t" style="left:378px;top:858px;color:#c9cad0;font-size:12px;line-height:20px;">MurphySec</div>
<svg style="left:458px;top:862px" width="13" height="13"><path d="M3.2 0.5 H9.8 L12.8 6.5 L9.8 12.5 H3.2 L0.2 6.5 Z" fill="#8c8e9c"/><path d="M5 3.8 L9 6.5 L5 9.2 Z" fill="#3d3f4e"/></svg>
<div class="t" style="left:475px;top:858px;color:#c9cad0;font-size:12px;line-height:20px;"><span style="font-size:11px">服务</span></div>
<svg style="left:517px;top:862px" width="12" height="12"><path d="M6 0.5 L11.8 11.5 H0.2 Z" fill="#8c8e9c"/><path d="M6 4 V8" stroke="#3d3f4e" stroke-width="1.3"/><circle cx="6" cy="9.8" r="0.8" fill="#3d3f4e"/></svg>
<div class="t" style="left:533px;top:858px;color:#c9cad0;font-size:12px;line-height:20px;"><span style="font-size:11px">自动构建</span></div>
<svg style="left:597px;top:861px" width="14" height="15"><path d="M10 4 C9 2 7.5 1 5.5 1 C3 1 1 3 1 5.5 C1 8 3 10 5.5 10" stroke="#8c8e9c" stroke-width="1.3" fill="none"/><path d="M5.5 3 V6 L7 7" stroke="#8c8e9c" stroke-width="1.1" fill="none"/><path d="M7 6.5 L13.5 10.5 L7 14.5 Z" fill="#8c8e9c"/></svg>
<div class="t" style="left:615px;top:858px;color:#c9cad0;font-size:12px;line-height:20px;">Profiler</div>
<svg style="left:1481px;top:861px" width="16" height="14"><ellipse cx="7" cy="8" rx="6" ry="5.5" fill="#1d1d20"/><path d="M2 4 C5 2 10 2 14 4 L12 6 C9 5 6 5 3 6 Z" fill="#d8282e"/><path d="M9 2 L13 0.5 L11 3.5" fill="#e8e8e8"/></svg>
<div class="t" style="left:1501px;top:858px;color:#c9cad0;font-size:12px;line-height:20px;">MyBatis Log</div>
<svg style="left:6px;top:883px" width="12" height="12"><rect x="3" y="0.5" width="8.5" height="8.5" fill="none" stroke="#8c8e9c" stroke-width="1"/><path d="M0.5 3 V11.5 H9" stroke="#8c8e9c" stroke-width="1" fill="none"/></svg>
<div class="t" style="left:31px;top:880px;color:#c3c4ca;font-size:11.8px;line-height:20px;">Auto fetch: finish... (3 <span style="font-size:11px">分钟 之前</span>)</div>
<div class="t" style="left:914px;top:880px;color:#c3c4ca;font-size:12px;line-height:20px;">Vue TypeScript 4.6.4</div>
<svg style="left:1033px;top:883px" width="14" height="14"><defs><linearGradient id="tb" x1="0" y1="0" x2="1" y2="1"><stop offset="0" stop-color="#c03ee8"/><stop offset="1" stop-color="#4f7cf0"/></linearGradient></defs><path d="M6.5 0.8 L12 4 V10 L6.5 13.2 L1 10 V4 Z" fill="none" stroke="url(#tb)" stroke-width="1.2"/><path d="M3.5 4 V10 L9.5 7 Z" fill="none" stroke="url(#tb)" stroke-width="1"/></svg>
<div class="t" style="left:1050px;top:880px;color:#d6d7dc;font-size:14.5px;line-height:20px;letter-spacing:0.25px">tabnine</div>
<svg style="left:1114px;top:883px" width="9" height="14"><circle cx="1.8" cy="1.8" r="1.6" fill="#8c8e9c"/><circle cx="1.8" cy="12" r="1.6" fill="#8c8e9c"/><circle cx="7.2" cy="3" r="1.6" fill="#8c8e9c"/><path d="M1.8 2 V12 M7.2 3.5 C7.2 7 1.8 7 1.8 10" stroke="#8c8e9c" stroke-width="1.4" fill="none"/></svg>
<div class="t" style="left:1130px;top:880px;color:#c3c4ca;font-size:12px;line-height:20px;">DEV1.0.0</div>
<svg style="left:1186px;top:883px" width="16" height="14"><path d="M3 10 C0.5 10 0.5 6 3 6 C3 3 6 1.5 8.5 3 C10 1.5 13 2.5 13 5.5 C14.5 6 14.5 8 13 9 H3 Z" fill="#8c8e9c"/><circle cx="12" cy="11" r="2.6" fill="#3d3f4e"/><circle cx="12" cy="11" r="1.8" fill="none" stroke="#8c8e9c" stroke-width="1.1"/></svg>
<svg style="left:1211px;top:883px" width="12" height="13"><rect x="0" y="0" width="12" height="13" rx="1.5" fill="#1fbf8a"/><path d="M2.5 3.5 L5 6 L2.5 8.5" stroke="#fff" stroke-width="1.2" fill="none"/><path d="M6 9.5 H9" stroke="#fff" stroke-width="1.1"/></svg>
<svg style="left:1233px;top:883px" width="12" height="12"><circle cx="6" cy="6" r="5.8" fill="#55575f"/><path d="M6 2.5 V6.5" stroke="#3d3f4e" stroke-width="1.6"/><circle cx="6" cy="8.8" r="0.9" fill="#3d3f4e"/></svg>
<svg style="left:1256px;top:882px" width="14" height="14"><circle cx="7" cy="7" r="6.8" fill="#2f6ee0"/><path d="M7 3.5 L10.2 9.8 H3.8 Z" fill="none" stroke="#fff" stroke-width="1.2"/></svg>
<div class="t" style="left:1273px;top:880px;color:#c3c4ca;font-size:12px;line-height:20px;">4 Δ/up-to-date</div>
<div class="t" style="left:1363px;top:880px;color:#c3c4ca;font-size:11.7px;line-height:20px;">Blame: You 2022/5/12, 23:35</div>
<div class="a" style="left:1518px;top:880px;width:76px;height:18px;background:#6b6c72;"></div>
<div class="t" style="left:1527px;top:880px;color:#d6d6da;font-size:11.6px;line-height:19px;">1472/1536M</div>
</div></body></html>
